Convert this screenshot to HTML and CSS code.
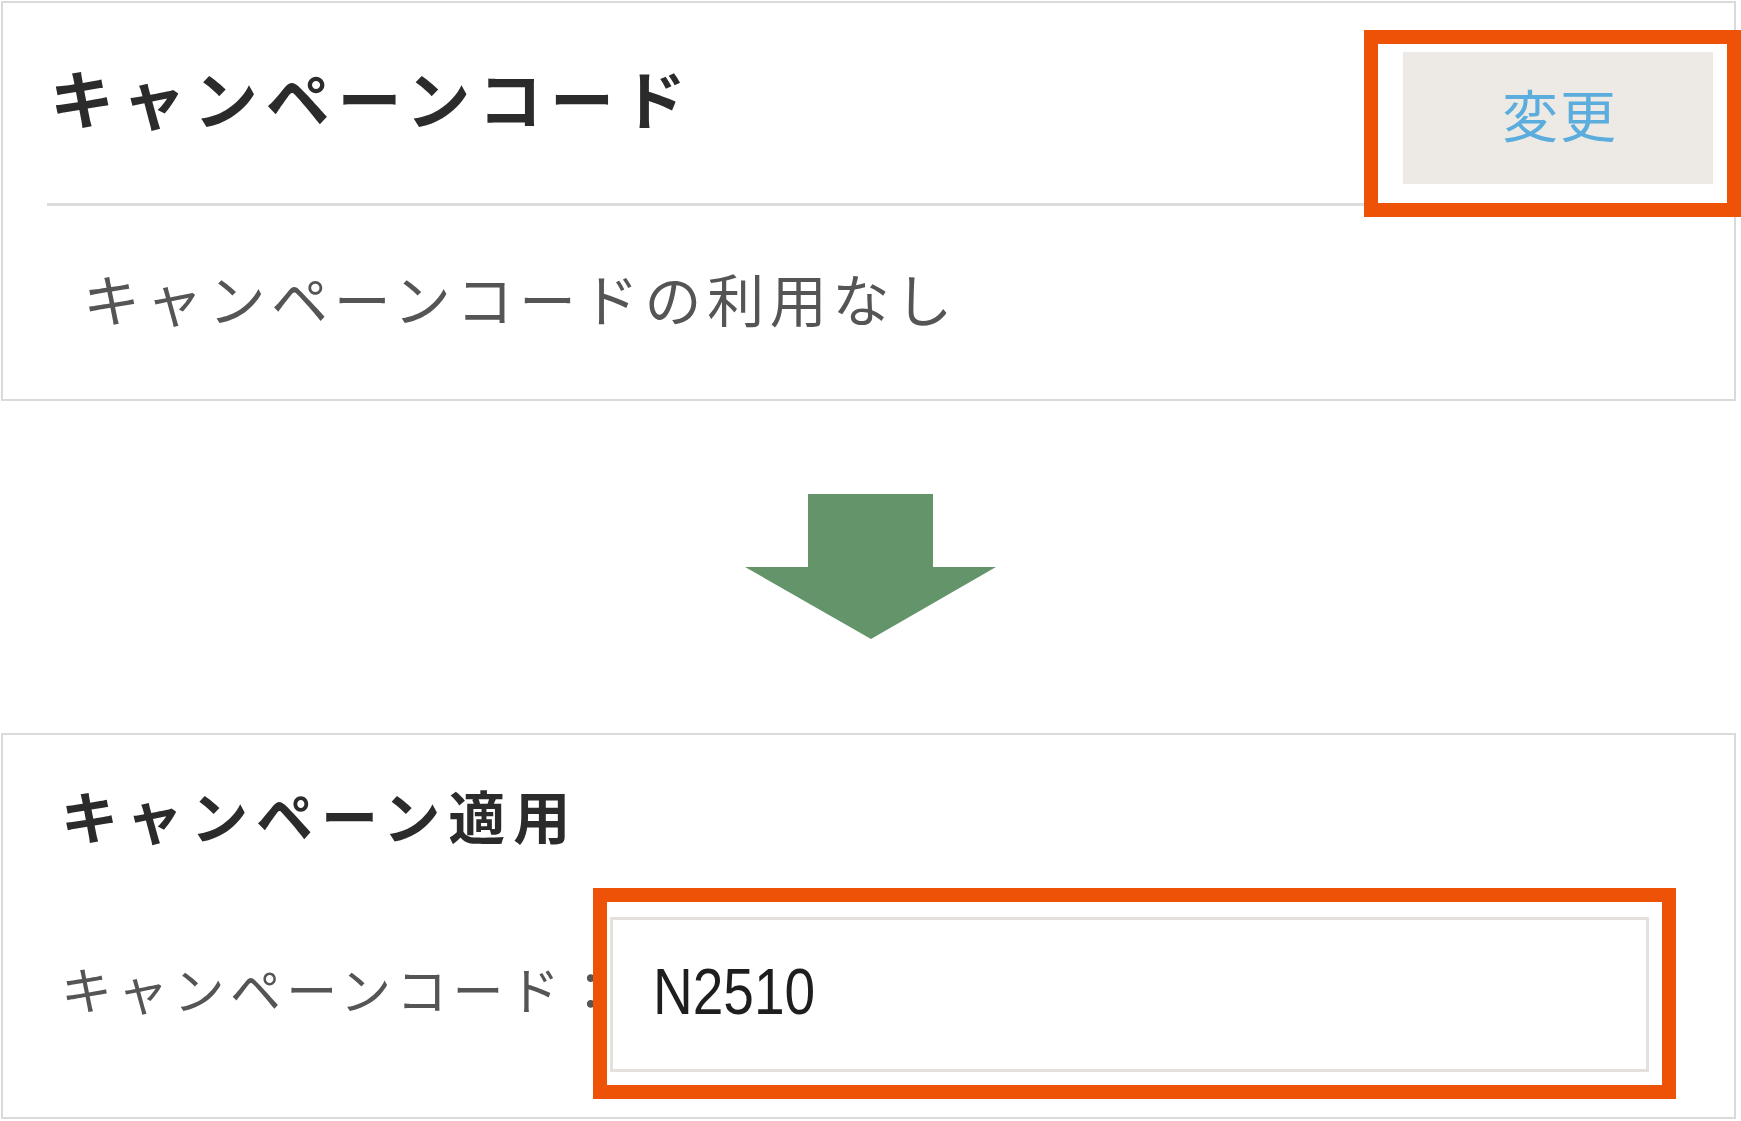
FILE: index.html
```html
<!DOCTYPE html>
<html lang="ja">
<head>
<meta charset="utf-8">
<title>キャンペーンコード</title>
<link rel="stylesheet" href="styles.css">
</head>
<body>
<div class="page">
  <section class="card card-code">
    <div class="card-header">
      <h2 class="title">キャンペーンコード</h2>
      <div class="btn-wrap">
        <button class="btn-change" type="button">変更</button>
        <span class="highlight highlight-btn"></span>
      </div>
    </div>
    <p class="note">キャンペーンコードの利用なし</p>
  </section>

  <div class="arrow-row">
    <svg class="arrow" width="251" height="145" viewBox="0 0 251 145" aria-hidden="true">
      <polygon points="63,0 188,0 188,73 251,73 126,145 0,73 63,73" fill="#64956a"/>
    </svg>
  </div>

  <section class="card card-apply">
    <h2 class="title2">キャンペーン適用</h2>
    <div class="field-row">
      <label class="field-label" for="code">キャンペーンコード：</label>
      <div class="input-wrap">
        <div class="input-box" id="code"><span class="input-value">N2510</span></div>
        <span class="highlight highlight-input"></span>
      </div>
    </div>
  </section>
</div>
</body>
</html>
```

FILE: styles.css
```css
html, body {
  margin: 0;
  padding: 0;
  background: #ffffff;
}

body {
  width: 1741px;
  height: 1121px;
  overflow: hidden;
  font-family: "Noto Sans CJK JP", "Noto Sans", sans-serif;
}

.page {
  padding-top: 1px;
}

.card {
  box-sizing: border-box;
  width: 1735px;
  margin-left: 1px;
  border: 2px solid #dadada;
  background: #fff;
}

/* ---------- top card ---------- */
.card-code {
  padding: 0 21px 0 44px;
}

.card-header {
  display: flex;
  justify-content: space-between;
  align-items: flex-start;
  height: 200px;
  border-bottom: 3px solid #dcdcdc;
}

.title {
  margin: 53px 0 0 3px;
  font-size: 64px;
  line-height: 80px;
  font-weight: 700;
  letter-spacing: 7.9px;
  color: #2b2b2b;
}

.btn-wrap {
  position: relative;
  margin-top: 49px;
}

.btn-change {
  display: flex;
  align-items: center;
  justify-content: center;
  box-sizing: border-box;
  width: 310px;
  height: 132px;
  padding: 0 0 10px 4px;
  border: 0;
  background: #ede9e4;
  color: #5aaddd;
  font-family: "Noto Sans CJK JP", sans-serif;
  font-size: 56px;
  line-height: 1;
  letter-spacing: 2px;
}

.highlight {
  position: absolute;
  border: 14px solid #ed5206;
  pointer-events: none;
}

.highlight-btn {
  top: -22px;
  left: -39px;
  right: -28px;
  bottom: -33px;
}

.note {
  margin: 0;
  padding: 51px 0 62px 36px;
  font-size: 57px;
  line-height: 80px;
  letter-spacing: 5.7px;
  color: #555;
  font-weight: 400;
}

/* ---------- arrow ---------- */
.arrow-row {
  display: flex;
  justify-content: center;
  padding: 93px 0 94px 0;
}

.arrow {
  display: block;
}

/* ---------- bottom card ---------- */
.card-apply {
  padding: 39px 0 45px 58px;
}

.title2 {
  margin: 0;
  font-size: 57px;
  line-height: 80px;
  font-weight: 700;
  letter-spacing: 8px;
  color: #2b2b2b;
}

.field-row {
  display: flex;
  align-items: center;
  margin-top: 63px;
}

.field-label {
  flex: none;
  width: 549px;
  padding-bottom: 14px;
  white-space: nowrap;
  font-size: 51px;
  letter-spacing: 5.3px;
  color: #555;
}

.input-wrap {
  position: relative;
  flex: none;
}

.input-box {
  display: flex;
  align-items: center;
  box-sizing: border-box;
  width: 1039px;
  height: 155px;
  padding: 0 0 5px 40px;
  border: 3px solid #e4e0dc;
  font-family: "Liberation Sans", Arial, sans-serif;
  font-size: 64px;
  color: #1e1e1e;
}

.input-value {
  display: inline-block;
  transform: scaleX(0.86);
  transform-origin: left center;
}

.highlight-input {
  top: -29px;
  left: -17px;
  right: -27px;
  bottom: -27px;
}
```
